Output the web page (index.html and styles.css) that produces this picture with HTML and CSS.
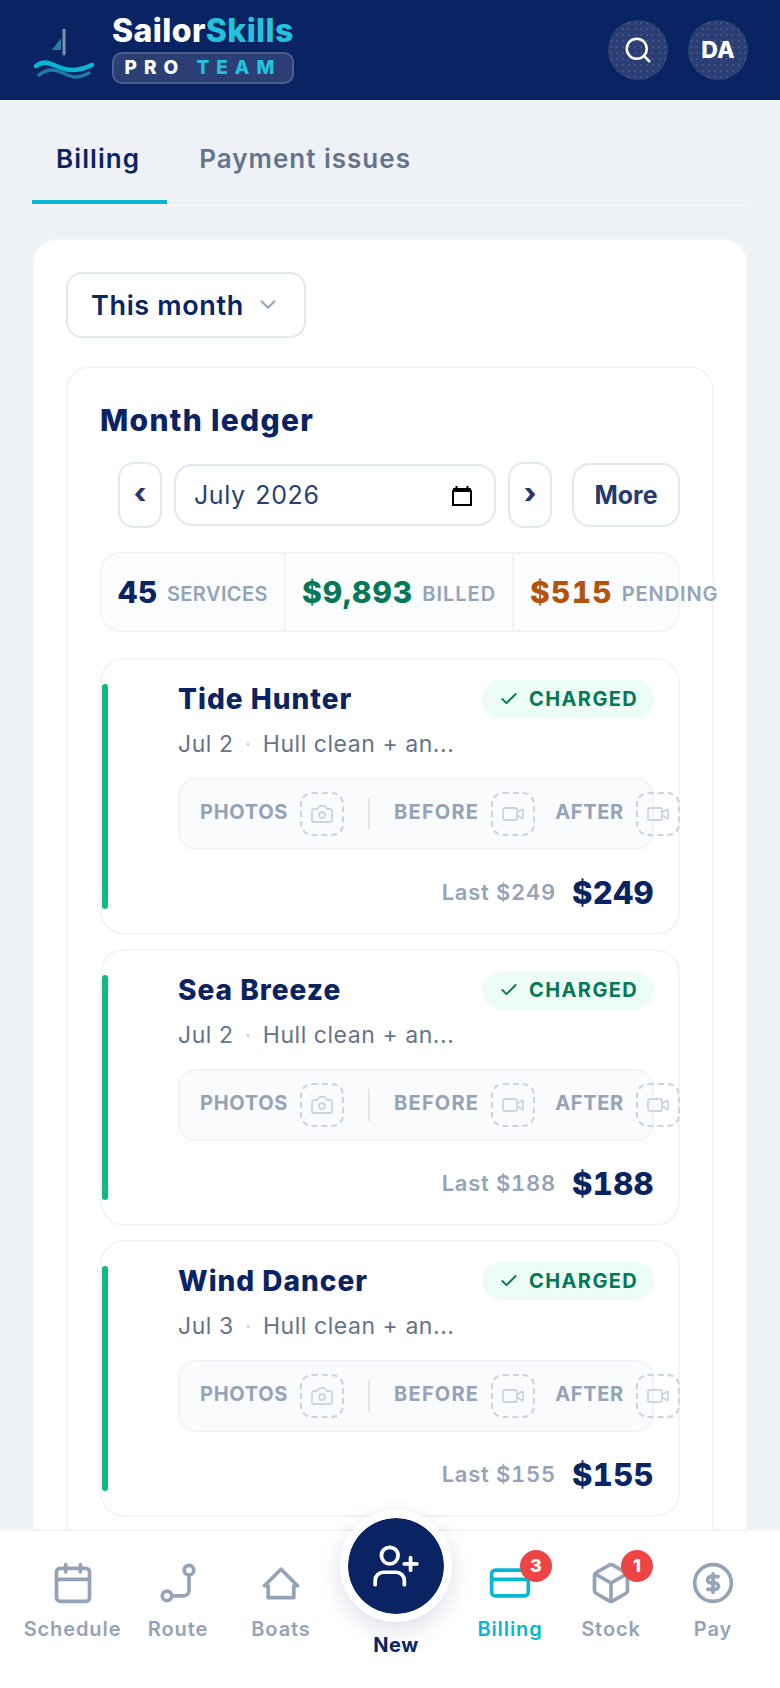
FILE: index.html
```html
<!DOCTYPE html>
<html lang="en">
<head>
    <meta charset="UTF-8" />
    <meta name="viewport" content="width=device-width, initial-scale=1" />
    <title>SailorSkills Pro Team</title>
    <link rel="stylesheet" href="styles.css">
</head>
<body>
    <svg class="sprite" aria-hidden="true">
        <symbol id="i-camera" viewBox="0 0 24 24"><path d="M14.5 4h-5L7 7H4a2 2 0 0 0-2 2v9a2 2 0 0 0 2 2h16a2 2 0 0 0 2-2V9a2 2 0 0 0-2-2h-3z"/><circle cx="12" cy="13" r="3"/></symbol>
        <symbol id="i-video" viewBox="0 0 24 24"><path d="m16 13 5.2 3.5a.5.5 0 0 0 .8-.4V7.9a.5.5 0 0 0-.8-.4L16 10.5"/><rect x="2" y="6" width="14" height="12" rx="2"/></symbol>
    </svg>

    <header class="topbar">
        <div class="logo">
            <svg class="logo-mark" width="66" height="60" viewBox="30 25 66 60">
                <path class="sail" d="M61 38v12h-9z"/>
                <path class="mast" d="M64 30v24"/>
                <path class="wave" d="M36 66c4-3 8-4 12-3 8 2 14 7 24 7 7 0 14-2 20-5"/>
                <path class="wave-low" d="M39 75c4-3 8-5 13-5 9 0 15 7 24 7 5 0 9-2 13-4"/>
            </svg>
            <div class="brand">
                <div class="brand-name">Sailor<span class="accent">Skills</span></div>
                <div class="brand-badge">PRO <span class="accent">TEAM</span></div>
            </div>
        </div>
        <div class="top-actions">
            <button class="round-btn" aria-label="Search">
                <svg width="30" height="30" viewBox="0 0 24 24" fill="none" stroke="#fff" stroke-width="2" stroke-linecap="round"><circle cx="11" cy="11" r="8"/><path d="m21 21-4.3-4.3"/></svg>
            </button>
            <button class="round-btn">DA</button>
        </div>
    </header>

    <main class="content">
        <nav class="tabs">
            <a class="tab active">Billing</a>
            <a class="tab">Payment issues</a>
        </nav>

        <section class="panel">
            <button class="period">This month
                <svg width="22" height="22" viewBox="0 0 24 24" fill="none" stroke="#94a3b8" stroke-width="2.2" stroke-linecap="round" stroke-linejoin="round"><path d="m5 8 7 7 7-7"/></svg>
            </button>

            <div class="ledger">
                <h2>Month ledger</h2>
                <div class="month-row">
                    <button class="step">‹</button>
                    <div class="month-input">
                        <span>July 2026</span>
                        <svg width="22" height="24" viewBox="0 0 22 24" fill="none" stroke="#000" stroke-width="2"><path d="M2 7h18v14H2zM5.500 2v3M16.500 2v3"/><path d="M2 6h18" stroke-width="4"/></svg>
                    </div>
                    <button class="step">›</button>
                    <button class="more">More</button>
                </div>

                <div class="summary">
                    <div class="stat"><b>45</b><span>SERVICES</span></div>
                    <div class="stat"><b class="green">$9,893</b><span>BILLED</span></div>
                    <div class="stat"><b class="orange">$515</b><span>PENDING</span></div>
                </div>

                <article class="job">
                    <div class="job-bar"></div>
                    <div class="job-body">
                        <div class="job-head">
                            <h3>Tide Hunter</h3>
                            <span class="chip"><svg width="20" height="20" viewBox="0 0 24 24" fill="none" stroke="currentColor" stroke-width="2.2" stroke-linecap="round" stroke-linejoin="round"><path d="M20 6 9 17l-5-5"/></svg>CHARGED</span>
                        </div>
                        <p class="job-meta">Jul 2<i>·</i>Hull clean + an...</p>
                        <div class="media">
                            <span class="media-label">PHOTOS</span>
                            <span class="slot"><svg width="24" height="24"><use href="#i-camera"/></svg></span>
                            <span class="media-sep"></span>
                            <span class="media-label">BEFORE</span>
                            <span class="slot"><svg width="24" height="24"><use href="#i-video"/></svg></span>
                            <span class="media-label after">AFTER</span>
                            <span class="slot"><svg width="24" height="24"><use href="#i-video"/></svg></span>
                        </div>
                        <div class="job-price"><span>Last $249</span><b>$249</b></div>
                    </div>
                </article>

                <article class="job">
                    <div class="job-bar"></div>
                    <div class="job-body">
                        <div class="job-head">
                            <h3>Sea Breeze</h3>
                            <span class="chip"><svg width="20" height="20" viewBox="0 0 24 24" fill="none" stroke="currentColor" stroke-width="2.2" stroke-linecap="round" stroke-linejoin="round"><path d="M20 6 9 17l-5-5"/></svg>CHARGED</span>
                        </div>
                        <p class="job-meta">Jul 2<i>·</i>Hull clean + an...</p>
                        <div class="media">
                            <span class="media-label">PHOTOS</span>
                            <span class="slot"><svg width="24" height="24"><use href="#i-camera"/></svg></span>
                            <span class="media-sep"></span>
                            <span class="media-label">BEFORE</span>
                            <span class="slot"><svg width="24" height="24"><use href="#i-video"/></svg></span>
                            <span class="media-label after">AFTER</span>
                            <span class="slot"><svg width="24" height="24"><use href="#i-video"/></svg></span>
                        </div>
                        <div class="job-price"><span>Last $188</span><b>$188</b></div>
                    </div>
                </article>

                <article class="job">
                    <div class="job-bar"></div>
                    <div class="job-body">
                        <div class="job-head">
                            <h3>Wind Dancer</h3>
                            <span class="chip"><svg width="20" height="20" viewBox="0 0 24 24" fill="none" stroke="currentColor" stroke-width="2.2" stroke-linecap="round" stroke-linejoin="round"><path d="M20 6 9 17l-5-5"/></svg>CHARGED</span>
                        </div>
                        <p class="job-meta">Jul 3<i>·</i>Hull clean + an...</p>
                        <div class="media">
                            <span class="media-label">PHOTOS</span>
                            <span class="slot"><svg width="24" height="24"><use href="#i-camera"/></svg></span>
                            <span class="media-sep"></span>
                            <span class="media-label">BEFORE</span>
                            <span class="slot"><svg width="24" height="24"><use href="#i-video"/></svg></span>
                            <span class="media-label after">AFTER</span>
                            <span class="slot"><svg width="24" height="24"><use href="#i-video"/></svg></span>
                        </div>
                        <div class="job-price"><span>Last $155</span><b>$155</b></div>
                    </div>
                </article>
            </div>
        </section>
    </main>

    <nav class="bottom-nav">
        <a class="nav-item">
            <span class="nav-icon"><svg width="44" height="44" viewBox="0 0 24 24"><rect x="3" y="4" width="18" height="18" rx="2"/><path d="M8 2v4M16 2v4M3 10h18"/></svg></span>
            Schedule
        </a>
        <a class="nav-item">
            <span class="nav-icon"><svg width="44" height="44" viewBox="0 0 24 24"><circle cx="6" cy="19" r="2.6"/><circle cx="18" cy="5" r="2.6"/><path d="M8.6 19H15a3 3 0 0 0 3-3V7.6"/></svg></span>
            Route
        </a>
        <a class="nav-item">
            <span class="nav-icon"><svg width="44" height="44" viewBox="0 0 24 24"><path d="M3 13.5 12 4.5l9 9h-2V20H5v-6.500z"/></svg></span>
            Boats
        </a>
        <a class="nav-item nav-new">
            <span class="fab"><svg width="50" height="50" viewBox="0 0 24 24"><path d="M16 21v-2a4 4 0 0 0-4-4H6a4 4 0 0 0-4 4v2"/><circle cx="9" cy="7" r="4"/><path d="M19 8v6M22 11h-6"/></svg></span>
            New
        </a>
        <a class="nav-item current">
            <span class="nav-icon"><svg width="44" height="44" viewBox="0 0 24 24"><rect x="2" y="5" width="20" height="14" rx="2"/><path d="M2 10h20"/></svg><em class="count">3</em></span>
            Billing
        </a>
        <a class="nav-item">
            <span class="nav-icon"><svg width="44" height="44" viewBox="0 0 24 24"><path d="M21 8a2 2 0 0 0-1-1.730l-7-4a2 2 0 0 0-2 0l-7 4A2 2 0 0 0 3 8v8a2 2 0 0 0 1 1.730l7 4a2 2 0 0 0 2 0l7-4a2 2 0 0 0 1-1.730z"/><path d="m3.300 7 8.700 5 8.700-5M12 22V12"/></svg><em class="count">1</em></span>
            Stock
        </a>
        <a class="nav-item">
            <span class="nav-icon"><svg width="44" height="44" viewBox="0 0 24 24"><circle cx="12" cy="12" r="10"/><path d="M14.800 8.500h-4a1.750 1.750 0 0 0 0 3.500h2.400a1.750 1.750 0 0 1 0 3.500H9.200M12 17v-10"/></svg></span>
            Pay
        </a>
    </nav>
</body>
</html>
```
FILE: styles.css
```css
* { box-sizing: border-box; }
html, body { margin: 0; height: 100%; }
body { display: flex; flex-direction: column; height: 100vh; overflow: hidden; background: #eef2f7; color: #0a2463; font-family: Inter, "Noto Sans", sans-serif; }
button { font-family: inherit; background: #fff; cursor: pointer; }
h2, h3, p { margin: 0; }
.sprite { display: none; }
.accent { color: #22c3dc; }

/* top bar */
.topbar { flex: none; height: 100px; display: flex; justify-content: space-between; align-items: center; padding: 0 32px; background: #0a2463; }
.logo { display: flex; align-items: flex-start; align-self: flex-start; }
.logo-mark { margin-top: 25px; margin-left: -2px; fill: none; stroke-linecap: round; }
.sail { fill: #2f7aa8; }
.mast { stroke: #7f8fb3; stroke-width: 3; }
.wave { stroke: #06b6d4; stroke-width: 4.500; }
.wave-low { stroke: #1d7ba6; stroke-width: 3.500; }
.brand { margin: 15px 0 0 16px; }
.brand-name { color: #fff; font-size: 32px; line-height: 32px; font-weight: 800; letter-spacing: 0.4px; white-space: nowrap; }
.brand-badge { width: 182px; height: 32px; margin-top: 5px; border: 2px solid #4d5f8d; border-radius: 10px; background-color: #2b3f75; color: #fff; font-size: 19px; line-height: 28px; font-weight: 800; letter-spacing: 7px; text-align: center; white-space: nowrap; }
.top-actions { display: flex; gap: 20px; }
.round-btn { width: 60px; height: 60px; display: flex; align-items: center; justify-content: center; border: 0; border-radius: 50%; padding: 0; color: #fff; font-size: 23px; font-weight: 800; background: #2b3f75 radial-gradient(circle, #3f5285 1px, transparent 1.200px) 0 0 / 6px 6px; }

/* tabs */
.content { flex: 1; min-height: 0; padding: 20px 32px 0; overflow: hidden; }
.tabs { display: flex; gap: 8px; border-bottom: 2px solid #f4f6fa; margin-bottom: 32px; }
.tab { padding: 24px 25px 26px 24px; border-bottom: 4px solid transparent; font-size: 26px; line-height: 30px; font-weight: 600; letter-spacing: 1px; color: #64748b; }
.tab.active { padding-right: 27px; letter-spacing: 1.100px; color: #0a2463; border-bottom-color: #06b6d4; }

/* main panel */
.panel { border: 2px solid #f1f5f9; border-bottom: 0; border-radius: 24px 24px 0 0; background: #fff; padding: 32px 32px 0; }
.period { display: flex; align-items: center; gap: 13px; width: 240px; height: 66px; padding: 0 23px; border: 2px solid #e2e8f0; border-radius: 16px; color: #0a2463; font-size: 27px; font-weight: 600; letter-spacing: 0.65px; white-space: nowrap; }
.ledger { margin-top: 28px; border: 2px solid #f1f5f9; border-radius: 24px; padding: 32px; }
.ledger h2 { padding-top: 1px; font-size: 30px; line-height: 39px; font-weight: 800; letter-spacing: 1.300px; }
.month-row { display: flex; align-items: center; justify-content: flex-end; gap: 12px; margin-top: 22px; }
.step { width: 44px; height: 66px; padding: 0 0 4px; border: 2px solid #e2e8f0; border-radius: 16px; color: #24396f; font-size: 28px; font-weight: 800; }
.month-input { display: flex; align-items: center; justify-content: space-between; width: 322px; height: 62px; padding: 0 21px 0 18px; border: 2px solid #e2e8f0; border-radius: 18px; background: #fff; color: #2a3f75; font-size: 25px; letter-spacing: 0.6px; word-spacing: 2px; }
.month-input svg { margin-top: 2px; }
.more { width: 108px; height: 64px; margin-left: 8px; padding: 0; border: 2px solid #e2e8f0; border-radius: 18px; color: #24396f; font-size: 25px; font-weight: 700; }

/* totals strip, the last cell runs past the edge */
.summary { display: flex; height: 80px; margin-top: 24px; border: 2px solid #f1f5f9; border-radius: 20px; background: #fbfcfd; white-space: nowrap; }
.stat { flex: none; display: flex; align-items: center; gap: 9px; padding: 0 16px; border-left: 2px solid #f1f5f9; }
.stat:first-child { border-left: 0; }
.stat b { font-size: 30px; font-weight: 800; letter-spacing: 0.6px; font-variant-numeric: tabular-nums; }
.stat span { font-size: 20px; font-weight: 600; letter-spacing: 0.4px; color: #94a3b8; padding-top: 4px; }
.stat:nth-child(2) b { letter-spacing: 1px; }
.stat:nth-child(2) span { letter-spacing: 1px; }
.stat:last-child b { letter-spacing: 1.200px; }
.stat:last-child span { letter-spacing: 0.9px; }
.green { color: #047857; }
.orange { color: #b45309; }

/* job cards */
.job { display: flex; height: 277px; margin-top: 14px; border: 2px solid #f1f5f9; border-radius: 24px; background: #fff; }
.summary + .job { margin-top: 26px; }
.job-bar { flex: none; width: 6px; margin: 24px 0; border-radius: 3px; background: #10b981; }
.job-body { flex: 1; min-width: 0; margin-left: 70px; padding: 20px 24px 0 0; }
.job-head { display: flex; justify-content: space-between; align-items: center; height: 38px; }
.job-head h3 { font-size: 28px; font-weight: 800; letter-spacing: 1px; }
.chip { display: flex; align-items: center; gap: 10px; width: 172px; height: 38px; padding-left: 17px; border-radius: 19px; background: #ecfdf5; color: #047857; font-size: 20px; font-weight: 700; letter-spacing: 1.400px; }
.job-meta { margin-top: 11px; font-size: 23px; line-height: 30px; letter-spacing: 0.55px; color: #64748b; }
.job-meta i { margin: 0 11px; font-style: normal; color: #cbd5e1; }
.media { display: flex; align-items: center; height: 72px; margin-top: 19px; padding-left: 20px; border: 2px solid #f1f5f9; border-radius: 18px; background: #fafbfc; white-space: nowrap; }
.media-label { flex: none; padding-bottom: 4px; font-size: 20px; font-weight: 700; letter-spacing: 0.7px; color: #94a3b8; }
.media-sep + .media-label { letter-spacing: 1.200px; }
.media-label.after { margin-left: 20px; }
.slot { flex: none; display: flex; align-items: center; justify-content: center; width: 44px; height: 44px; margin-left: 12px; border: 2px dashed #cbd5e1; border-radius: 12px; }
.slot svg { fill: none; stroke: #cbd5e1; stroke-width: 1.800; stroke-linecap: round; stroke-linejoin: round; }
.media-sep { flex: none; width: 2px; height: 32px; margin: 0 24px; background: #e2e8f0; }
.job-price { display: flex; justify-content: flex-end; align-items: center; gap: 16px; height: 40px; margin-top: 22px; }
.job-price span { font-size: 22px; font-weight: 600; letter-spacing: 0.7px; color: #94a3b8; font-variant-numeric: tabular-nums; }
.job-price b { font-size: 31px; font-weight: 800; letter-spacing: 0.4px; font-variant-numeric: tabular-nums; }

/* bottom navigation */
.bottom-nav { flex: none; display: grid; grid-template-columns: 105px 106px 100px 130px 98px 104px 100px; height: 159px; padding: 30px 0 0 20px; border-top: 2px solid #f1f5f9; background: #fff; position: relative; }
.nav-item { display: flex; flex-direction: column; align-items: center; font-size: 20px; line-height: 24px; font-weight: 600; letter-spacing: 0.9px; color: #94a3b8; }
.nav-icon { position: relative; width: 44px; height: 44px; margin-bottom: 12px; }
.nav-icon svg { display: block; fill: none; stroke: currentColor; stroke-width: 2; stroke-linecap: round; stroke-linejoin: round; }
.nav-item.current { color: #06b6d4; }
.nav-new { color: #0a2463; font-weight: 700; letter-spacing: 0.5px; }
.fab { display: flex; align-items: center; justify-content: center; width: 112px; height: 112px; margin: -51px 0 11px; border: 8px solid #fff; border-radius: 50%; background: #0a2463; background-clip: padding-box; box-shadow: 0 8px 24px rgba(10, 36, 99, 0.14); }
.fab svg { fill: none; stroke: #fff; stroke-width: 1.800; stroke-linecap: round; stroke-linejoin: round; }
.count { position: absolute; top: -11px; left: 32px; width: 32px; height: 32px; border-radius: 50%; background: #ef4444; color: #fff; font-size: 18px; line-height: 32px; font-weight: 800; font-style: normal; letter-spacing: 0; text-align: center; }
```
